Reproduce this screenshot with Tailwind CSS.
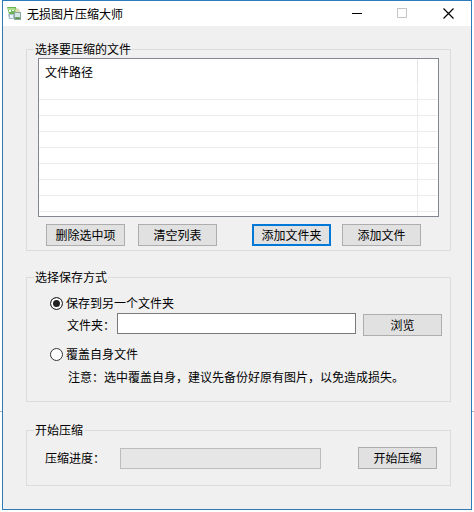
<!DOCTYPE html>
<html lang="zh-CN">
<head>
  <meta charset="UTF-8" />
  <meta name="viewport" content="width=device-width, initial-scale=1" />
  <title>无损图片压缩大师</title>
  <script src="https://cdn.jsdelivr.net/npm/@tailwindcss/browser@4"></script>
</head>
<body class="relative bg-white px-[2px] font-['Noto_Sans_CJK_SC',sans-serif] text-xs/4 text-black">

  <!-- Line of the page behind the window -->
  <div class="absolute inset-x-0 top-[411px] h-px bg-[#b0b0b0]"></div>

  <div class="relative border border-[#2b7cb8] bg-[#f0f0f0]">

    <!-- Title bar -->
    <header class="flex h-[25px] items-center bg-white pl-[3px]">
      <svg class="size-4" viewBox="0 0 16 16" aria-hidden="true">
        <path d="M1 1h9v3l-1 4H3z" fill="#6db455" />
        <path d="M2 2h7v2H2z" fill="#a9dc8c" />
        <path d="M3 4h2v2H3zM6 4h2v1H6z" fill="#fff" />
        <path d="M10 2l3 1 1 3-2 1-3-2z" fill="#d9dcae" />
        <path d="M2 8h6v5H3z" fill="#a9c0cb" />
        <path d="M4 9h3v3H4z" fill="#eaf4f8" />
        <path d="M8 6h7v8H8z" fill="#8aa5a0" />
        <path d="M9 7h5v4H9z" fill="#d5e8e4" />
        <path d="M9 13l2-2 1 1 1-1 1 2z" fill="#5b9b4a" />
      </svg>
      <h1 class="ml-[5px] flex-1">无损图片压缩大师</h1>
      <button type="button" class="flex h-full w-[46px] items-center justify-center" aria-label="最小化">
        <svg class="size-[11px]" viewBox="0 0 11 11"><path d="M0 5.5h10" stroke="#000" /></svg>
      </button>
      <button type="button" class="flex h-full w-[45px] items-center justify-center" aria-label="最大化" disabled>
        <svg class="size-[11px]" viewBox="0 0 11 11"><path d="M.5.5h9v9h-9z" fill="none" stroke="#c4c4c4" /></svg>
      </button>
      <button type="button" class="flex h-full w-[46px] items-center justify-center" aria-label="关闭">
        <svg class="size-[11px]" viewBox="0 0 11 11"><path d="M.5.5l10 10M10.5.5l-10 10" stroke="#000" stroke-width="1.2" /></svg>
      </button>
    </header>

    <main class="pt-[15px] pr-5 pb-[23px] pl-[23px]">

      <!-- Files -->
      <fieldset class="border border-[#dcdcdc] pr-[11px] pb-1 pl-[11px]">
        <legend class="-ml-1 px-px">选择要压缩的文件</legend>
        <div class="mt-px border border-[#828790] bg-white">
          <table class="w-full table-fixed border-separate border-spacing-0">
            <thead>
              <tr class="h-[25px]">
                <th class="border-r border-[#e5e5e5] pb-0 pl-[6px] text-left font-normal">文件路径</th>
                <th class="w-5"></th>
              </tr>
            </thead>
            <tbody id="fileRows"></tbody>
            <tfoot>
              <tr class="h-1">
                <td class="border-r border-[#ececec]"></td>
                <td></td>
              </tr>
            </tfoot>
          </table>
        </div>
        <div class="mt-[7px] flex justify-between pr-[18px] pl-2">
          <div class="flex gap-[13px]">
            <button type="button" class="h-[22px] w-[79px] border border-[#adadad] bg-[#e1e1e1]">删除选中项</button>
            <button type="button" class="h-[22px] w-[79px] border border-[#adadad] bg-[#e1e1e1]">清空列表</button>
          </div>
          <div class="flex gap-[11px]">
            <button type="button" class="h-[22px] w-[79px] border-2 border-[#0078d7] bg-[#e1e1e1]">添加文件夹</button>
            <button type="button" class="h-[22px] w-[79px] border border-[#adadad] bg-[#e1e1e1]">添加文件</button>
          </div>
        </div>
      </fieldset>

      <!-- Save mode -->
      <fieldset class="mt-[18px] border border-[#dcdcdc] pr-2 pb-4 pl-[11px]">
        <legend class="-ml-1 px-px">选择保存方式</legend>
        <div class="flex items-center gap-[3px] pt-[10px] pl-3">
          <input type="radio" id="saveOther" name="saveMode" checked class="size-[13px] appearance-none rounded-full border border-[#333] bg-white checked:bg-[#222] checked:shadow-[inset_0_0_0_2px_white]" />
          <label for="saveOther">保存到另一个文件夹</label>
        </div>
        <div class="mt-[2px] flex pl-[29px]">
          <label for="folder" class="w-[50px] pt-1 whitespace-nowrap">文件夹：</label>
          <input type="text" id="folder" class="h-[21px] min-w-0 flex-1 border border-[#7a7a7a] bg-white px-1 outline-none" />
          <button type="button" class="mt-px ml-[7px] h-[22px] w-[79px] border border-[#adadad] bg-[#e1e1e1]">浏览</button>
        </div>
        <div class="mt-[10px] flex items-center gap-[3px] pl-3">
          <input type="radio" id="saveSelf" name="saveMode" class="size-[13px] appearance-none rounded-full border border-[#333] bg-white checked:bg-[#222] checked:shadow-[inset_0_0_0_2px_white]" />
          <label for="saveSelf">覆盖自身文件</label>
        </div>
        <p class="mt-[7px] pl-[30px]">注意：选中覆盖自身，建议先备份好原有图片，以免造成损失。</p>
      </fieldset>

      <!-- Progress -->
      <fieldset class="mt-5 border border-[#dcdcdc] pr-[13px] pb-4 pl-[11px]">
        <legend class="-ml-1 px-px">开始压缩</legend>
        <div class="flex items-center pt-[9px] pl-[7px]">
          <label for="progress" class="w-[75px]">压缩进度：</label>
          <progress id="progress" value="0" max="100" class="h-[21px] min-w-0 flex-1 appearance-none border border-[#bcbcbc] bg-[#e6e6e6] [&::-webkit-progress-bar]:bg-[#e6e6e6] [&::-webkit-progress-value]:bg-[#06b025]"></progress>
          <button type="button" class="ml-[37px] h-[22px] w-[79px] border border-[#adadad] bg-[#e1e1e1]">开始压缩</button>
        </div>
      </fieldset>

    </main>
  </div>

  <script>
    const fileRows = document.getElementById("fileRows");

    // empty grid rows of the list
    for (let i = 0; i < 8; i++) {
      fileRows.insertAdjacentHTML("beforeend", `
        <tr class="h-4">
          <td class="border-r border-b border-[#ececec]"></td>
          <td class="border-b border-[#ececec]"></td>
        </tr>
      `);
    }
  </script>

</body>
</html>
